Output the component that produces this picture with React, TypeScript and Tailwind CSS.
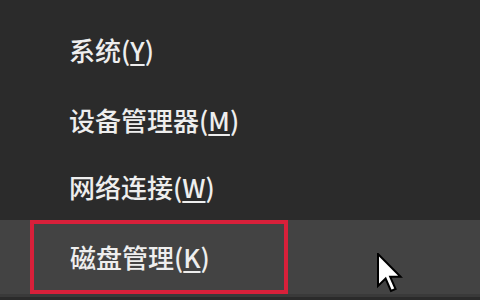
const font = { fontFamily: '"Noto Sans CJK SC", "Noto Sans", sans-serif' };

function Item({ label, keyChar }: { label: string; keyChar: string }) {
  return (
    <span className="text-[26px] font-medium leading-none text-[#eeeeee] whitespace-nowrap" style={font}>
      {label}(<span className="underline decoration-2 underline-offset-[3px]">{keyChar}</span>)
    </span>
  );
}

export default function App() {
  return (
    <div className="relative w-[480px] h-[300px] overflow-hidden bg-[#2b2b2b] flex flex-col pt-[14px]">
      <div className="h-[72px] flex items-center pl-[69px]">
        <Item label="系统" keyChar="Y" />
      </div>
      <div className="h-[68px] flex items-center pl-[69px]">
        <Item label="设备管理器" keyChar="M" />
      </div>
      <div className="h-[66px] flex items-center pl-[69px]">
        <Item label="网络连接" keyChar="W" />
      </div>
      {/* hovered row */}
      <div className="h-[77px] bg-[#434343] border-b-[3px] border-[#3a3a3a] flex items-start">
        <div className="ml-[30px] w-[258px] h-[74px] border-4 border-[#d8203a] flex items-center pl-[36px]">
          <Item label="磁盘管理" keyChar="K" />
        </div>
      </div>
      {/* mouse pointer */}
      <svg
        className="absolute left-[377px] top-[253px]"
        width="26"
        height="40"
        viewBox="0 0 13 20"
      >
        <path
          d="M0.5 0.5 L0.5 16.5 L4.3 12.8 L7 19 L9.3 18 L6.6 11.9 L11.8 11.9 Z"
          fill="#ffffff"
          stroke="#000000"
          strokeWidth="1"
          strokeLinejoin="miter"
        />
      </svg>
    </div>
  );
}
